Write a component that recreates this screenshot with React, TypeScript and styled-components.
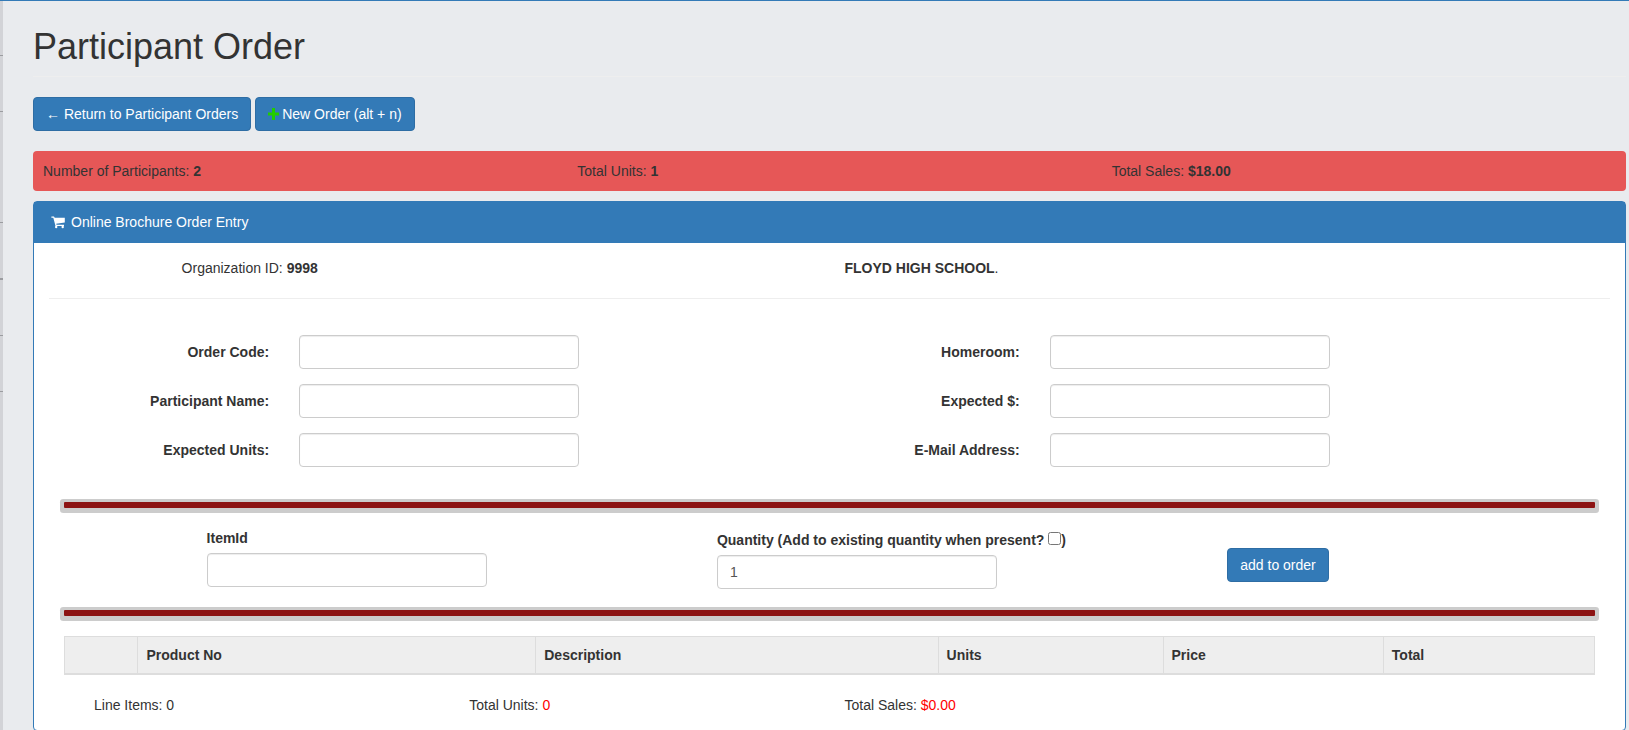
import React, { useState } from 'react';
import styled, { createGlobalStyle } from 'styled-components';

const BLUE = '#337ab7';

const GlobalStyle = createGlobalStyle`
  *, *::before, *::after { box-sizing: border-box; }
  body {
    margin: 0;
    color: #333;
    background: #e9ebee;
    font-family: "Liberation Sans", Arial, Helvetica, sans-serif;
    font-size: 14px;
    line-height: 20px;
  }
  button, input { font: inherit; }
`;

const Shell = styled.div`
  display: flex;
  min-height: 100vh;
  border-top: 1px solid ${BLUE};
`;

const NavEdge = styled.div`
  flex: none;
  width: 3px;
  background: #d2d3d7;
`;

const NavRow = styled.div<{ $height?: number; $line?: number }>`
  height: ${(p) => p.$height ?? 56}px;
  border-bottom: ${(p) => p.$line ?? 1}px solid #9b9ca0;
`;

const Main = styled.main`
  flex: 1;
  min-width: 0;
  padding: 20px 3px 0 30px;
`;

const Title = styled.h1`
  margin: 0;
  padding: 6px 0 9px;
  font-size: 36px;
  font-weight: 500;
  line-height: 40px;
  border-bottom: 1px solid #eee;
`;

const Toolbar = styled.div`
  display: flex;
  gap: 4px;
  margin: 20px 0;
`;

const Button = styled.button`
  display: inline-flex;
  align-items: center;
  gap: 3px;
  height: 34px;
  padding: 0 12px;
  color: #fff;
  background: ${BLUE};
  border: 1px solid #2e6da4;
  border-radius: 4px;
  white-space: nowrap;
  cursor: pointer;
`;

const Totals = styled.div`
  display: grid;
  grid-template-columns: repeat(3, 1fr);
  gap: 30px;
  padding: 10px;
  margin-bottom: 10px;
  background: #e65757;
  border-radius: 4px;
`;

const Panel = styled.section`
  background: #fff;
  border: 1px solid ${BLUE};
  border-radius: 4px;
`;

const PanelHeading = styled.h2`
  display: flex;
  align-items: center;
  gap: 6px;
  margin: 0;
  padding: 10px 17px 11px;
  color: #fff;
  background: ${BLUE};
  font-size: 14px;
  font-weight: 400;
  line-height: 20px;
`;

const PanelBody = styled.div`
  padding: 15px 0;
`;

const Columns = styled.div`
  display: grid;
  grid-template-columns: repeat(12, 1fr);
`;

const Column = styled.div<{ $start: number; $span: number }>`
  grid-column: ${(p) => p.$start} / span ${(p) => p.$span};
  padding-left: 15px;
`;

const Divider = styled.hr`
  height: 1px;
  margin: 20px 15px;
  border: 0;
  background: #eee;
`;

const Section = styled.div`
  padding: 0 30px;
`;

const FieldGrid = styled.div`
  display: grid;
  grid-template-columns: repeat(2, 1fr);
  row-gap: 15px;
  padding: 16px 15px 15px;
`;

const Field = styled.div`
  display: grid;
  grid-template-columns: 22fr 53fr;
  align-items: center;
`;

const FieldLabel = styled.label`
  padding-right: 30px;
  font-weight: 700;
  text-align: right;
`;

const TextInput = styled.input`
  display: block;
  width: 280px;
  max-width: 100%;
  height: 34px;
  padding: 6px 12px;
  color: #555;
  background: #fff;
  border: 1px solid #ccc;
  border-radius: 4px;
  box-shadow: inset 0 1px 1px rgba(0, 0, 0, 0.075);
`;

const Bar = styled.hr`
  height: 6px;
  margin: 20px 0;
  border: 0;
  border-radius: 1px;
  background: #8c1414;
  box-shadow: 0 1px 0 4px #ccc;
`;

const ItemRow = styled(Columns)`
  min-height: 62px;
`;

const ItemLabel = styled.div`
  margin-bottom: 5px;
  font-weight: 700;
`;

const AddExisting = styled.input`
  width: 13px;
  height: 13px;
  margin: 4px 0 0;
`;

const AddColumn = styled(Column)`
  padding-top: 20px;
`;

const Items = styled.table`
  width: 100%;
  margin-bottom: 20px;
  table-layout: fixed;
  border-collapse: collapse;
  border: 1px solid #ddd;
`;

const Th = styled.th<{ $width: number }>`
  width: ${(p) => p.$width}%;
  padding: 8px;
  text-align: left;
  background: #eee;
  border: 1px solid #ddd;
  border-bottom-width: 2px;
`;

const Summary = styled.div`
  display: grid;
  grid-template-columns: repeat(4, 1fr);
  padding: 0 15px;
`;

const SummaryCell = styled.div`
  padding-left: 15px;
`;

const Red = styled.span`
  color: #f00;
`;

const PlusIcon = () => (
  <svg width="11" height="12" viewBox="0 0 11 12" fill="#2c0" aria-hidden="true">
    <path d="M4 0h3v4.5h4v3H7V12H4V7.5H0v-3h4z" />
  </svg>
);

const CartIcon = () => (
  <svg width="14" height="14" viewBox="0 0 14 14" fill="#fff" aria-hidden="true">
    <path d="M.4 1.5H3l.7 1.3H13.8V7.4L5.2 8.7l.3 1.1H13v1.2H4.5L2.3 2.7H.4z" />
    <circle cx="5.2" cy="12" r="1.2" />
    <circle cx="11.7" cy="12" r="1.2" />
  </svg>
);

const FIELDS = [
  ['order-code', 'Order Code:'],
  ['homeroom', 'Homeroom:'],
  ['participant-name', 'Participant Name:'],
  ['expected-amount', 'Expected $:'],
  ['expected-units', 'Expected Units:'],
  ['email', 'E-Mail Address:'],
];

const ITEM_COLUMNS: [string, number][] = [
  ['', 4.8],
  ['Product No', 26],
  ['Description', 26.3],
  ['Units', 14.7],
  ['Price', 14.4],
  ['Total', 13.8],
];

export default function App() {
  const [quantity, setQuantity] = useState('1');

  return (
    <>
      <GlobalStyle />
      <Shell>
        <NavEdge>
          <NavRow $height={55} />
          <NavRow />
          <NavRow $height={111} />
          <NavRow $height={57} $line={2} />
          <NavRow />
          <NavRow />
        </NavEdge>
        <Main>
          <Title>Participant Order</Title>
          <Toolbar>
            <Button type="button">← Return to Participant Orders</Button>
            <Button type="button">
              <PlusIcon />
              New Order (alt + n)
            </Button>
          </Toolbar>
          <Totals>
            <div>Number of Participants: <strong>2</strong></div>
            <div>Total Units: <strong>1</strong></div>
            <div>Total Sales: <strong>$18.00</strong></div>
          </Totals>
          <Panel>
            <PanelHeading>
              <CartIcon />
              Online Brochure Order Entry
            </PanelHeading>
            <PanelBody>
              <Columns>
                <Column $start={2} $span={5}>Organization ID: <strong>9998</strong></Column>
                <Column $start={7} $span={5}><strong>FLOYD HIGH SCHOOL</strong>.</Column>
              </Columns>
              <Divider />
              <Section>
                <FieldGrid>
                  {FIELDS.map(([id, label]) => (
                    <Field key={id}>
                      <FieldLabel htmlFor={id}>{label}</FieldLabel>
                      <TextInput id={id} type="text" />
                    </Field>
                  ))}
                </FieldGrid>
                <Bar />
                <ItemRow>
                  <Column $start={2} $span={4}>
                    <ItemLabel><label htmlFor="item-id">ItemId</label></ItemLabel>
                    <TextInput id="item-id" type="text" />
                  </Column>
                  <Column $start={6} $span={4}>
                    <ItemLabel>
                      <label htmlFor="quantity">Quantity</label>{' '}
                      <label>
                        (Add to existing quantity when present? <AddExisting type="checkbox" />)
                      </label>
                    </ItemLabel>
                    <TextInput
                      id="quantity"
                      type="text"
                      value={quantity}
                      onChange={(e) => setQuantity(e.target.value)}
                    />
                  </Column>
                  <AddColumn $start={10} $span={3}>
                    <Button type="button">add to order</Button>
                  </AddColumn>
                </ItemRow>
                <Bar />
                <Items>
                  <thead>
                    <tr>
                      {ITEM_COLUMNS.map(([name, width]) => (
                        <Th key={name} $width={width} scope="col">{name}</Th>
                      ))}
                    </tr>
                  </thead>
                </Items>
                <Summary>
                  <SummaryCell>Line Items: 0</SummaryCell>
                  <SummaryCell>Total Units: <Red>0</Red></SummaryCell>
                  <SummaryCell>Total Sales: <Red>$0.00</Red></SummaryCell>
                </Summary>
              </Section>
            </PanelBody>
          </Panel>
        </Main>
      </Shell>
    </>
  );
}
